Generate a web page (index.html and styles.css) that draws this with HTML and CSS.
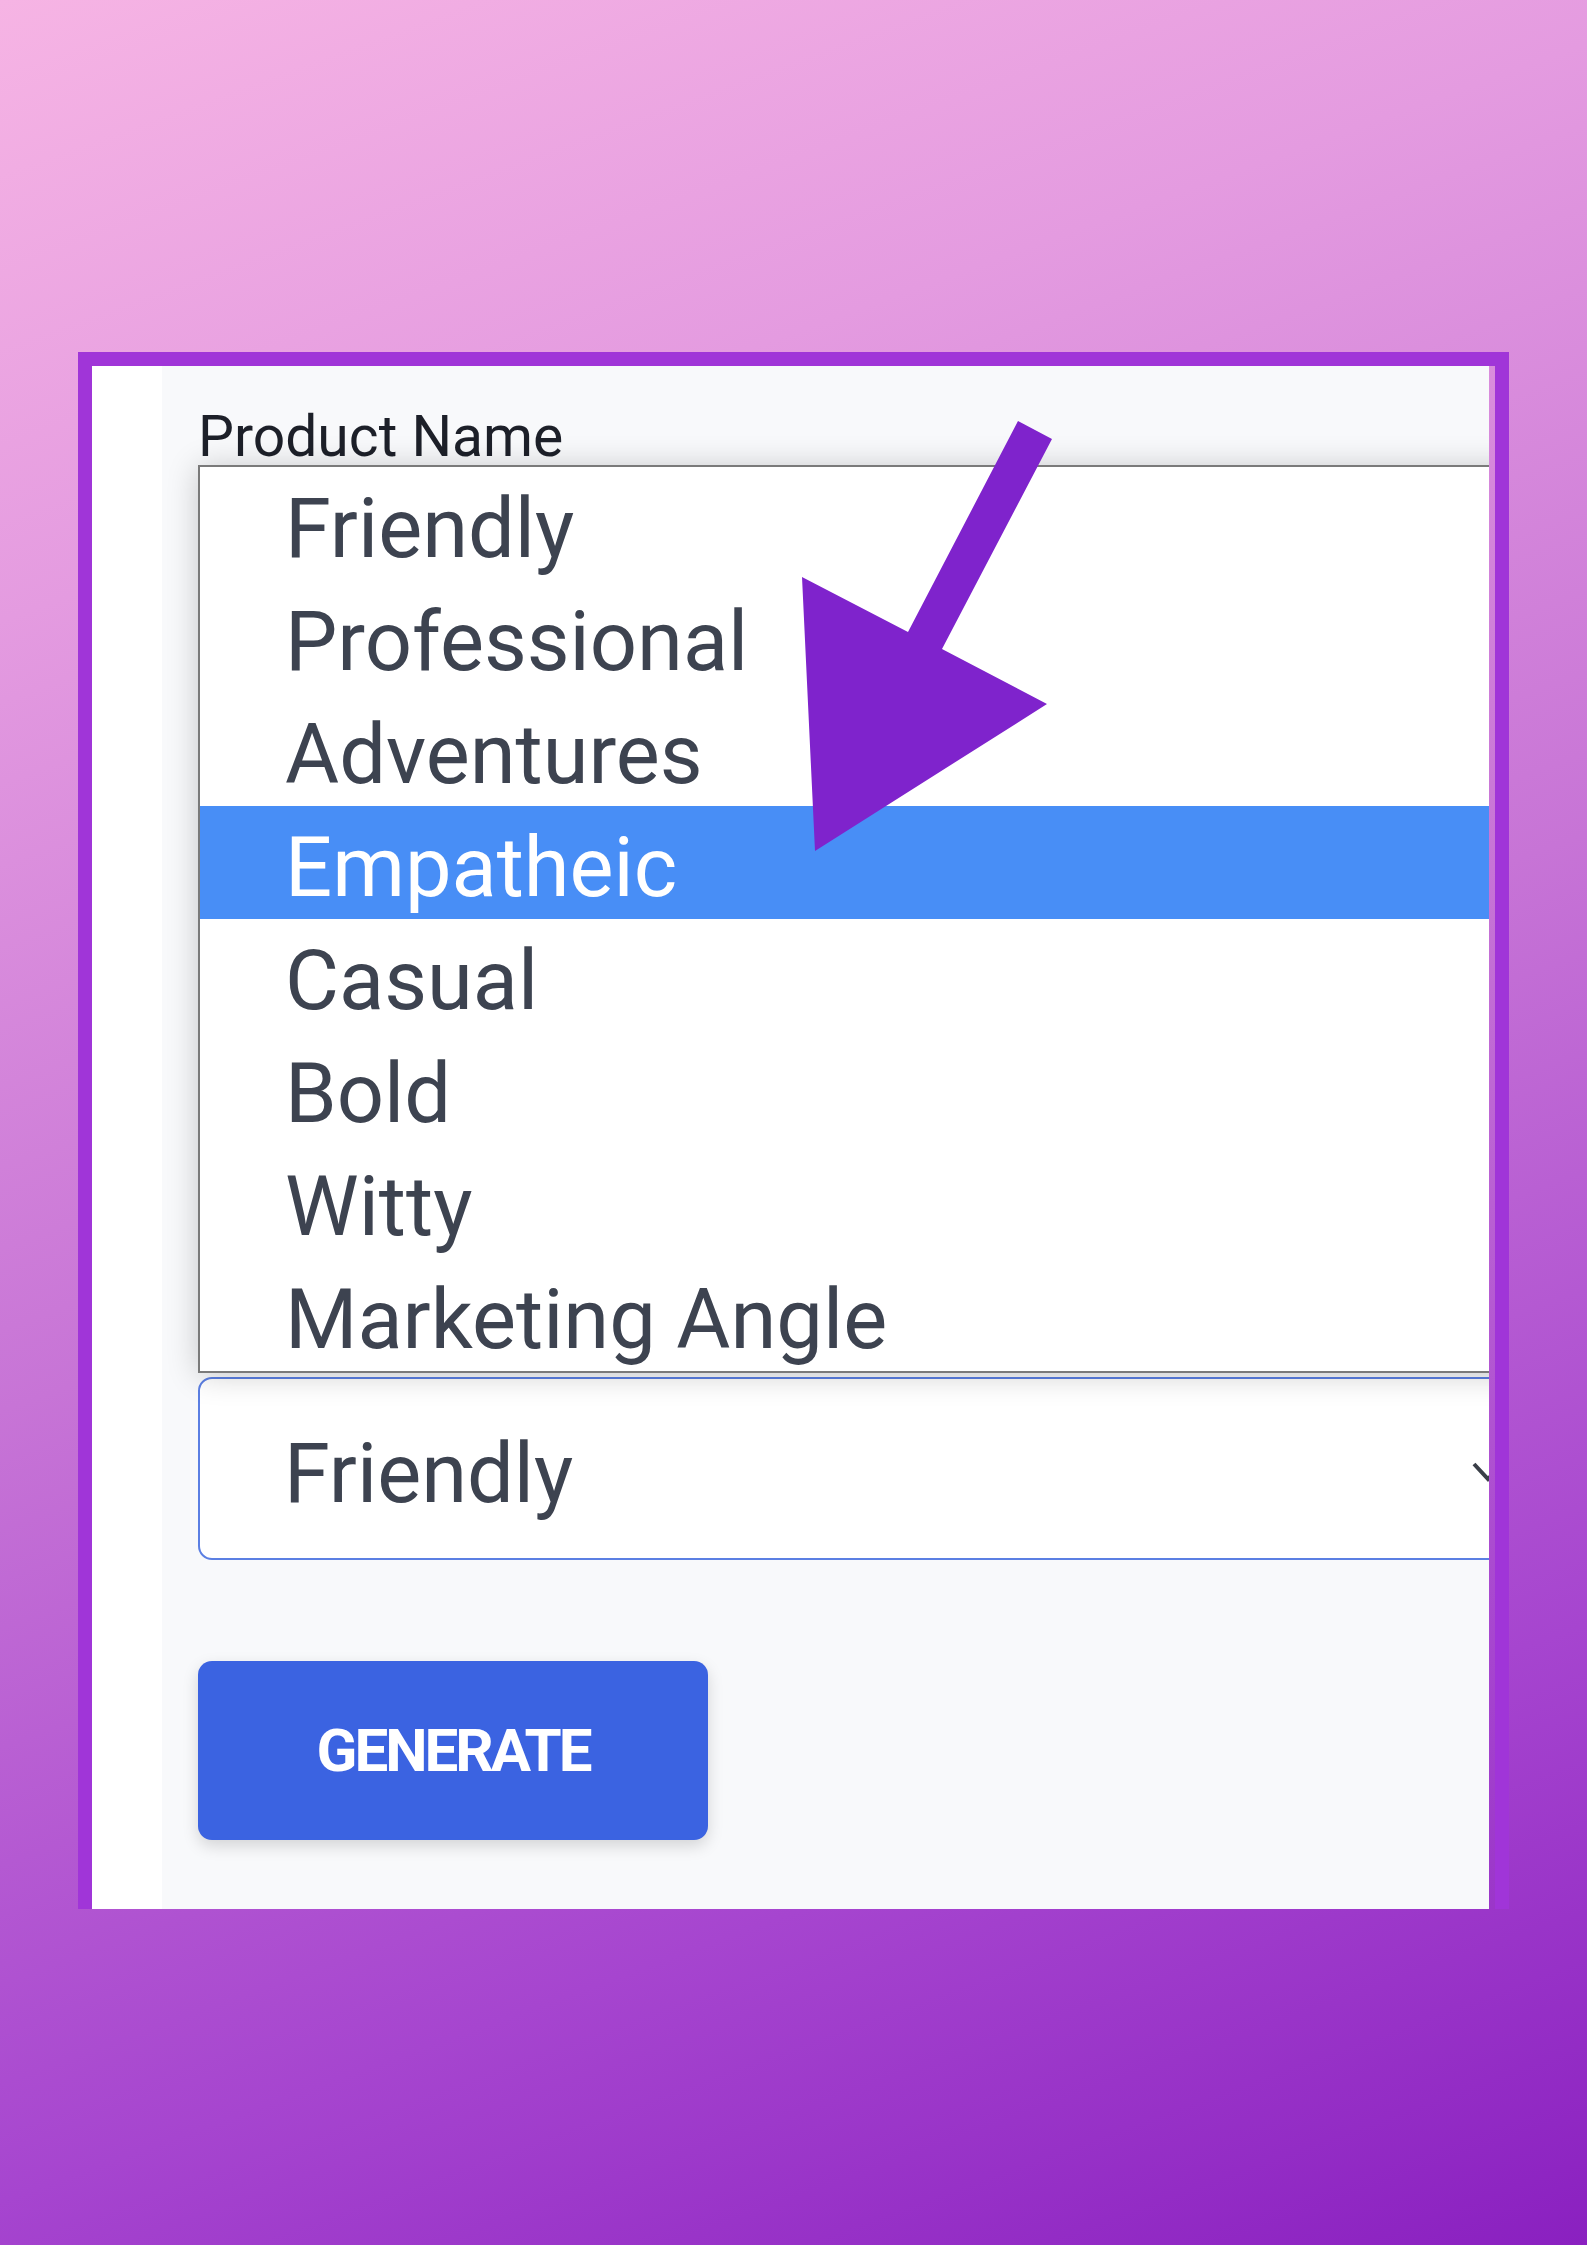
FILE: index.html
```html
<!DOCTYPE html>
<html lang="en">

<head>
    <meta charset="UTF-8">
    <title>Tone picker</title>
    <link rel="stylesheet" href="styles.css">
</head>

<body>
    <!-- Framed screenshot of the form -->
    <div class="frame">
        <div class="shot">
            <div class="gutter"></div>

            <div class="form">
                <label class="field-label" for="tone">Product Name</label>

                <!-- Open dropdown list -->
                <ul class="listbox">
                    <li>Friendly</li>
                    <li>Professional</li>
                    <li>Adventures</li>
                    <li class="selected">Empatheic</li>
                    <li>Casual</li>
                    <li>Bold</li>
                    <li>Witty</li>
                    <li>Marketing Angle</li>
                </ul>

                <div class="select" id="tone">
                    <span>Friendly</span>
                    <svg class="chevron" width="36" height="24" viewBox="0 0 36 24">
                        <path d="M4 3 L18 18 L32 3" fill="none" stroke="#3a3f48" stroke-width="4" />
                    </svg>
                </div>

                <button class="generate" type="button">GENERATE</button>
            </div>
        </div>
    </div>

    <!-- Pointer arrow over the list -->
    <svg class="arrow" width="1587" height="2245" viewBox="0 0 1587 2245">
        <polygon points="1018,421 1052,439 942,649 1047,704 815,851 802,577 908,632" fill="#7f23cc" />
    </svg>
</body>

</html>
```

FILE: styles.css
```css
html,
body {
    margin: 0;
    padding: 0;
}

body {
    width: 1587px;
    height: 2245px;
    overflow: hidden;
    position: relative;
    background: linear-gradient(160deg, #f6b4e4 0%, #e49be0 22%, #c774d6 50%, #a645cf 78%, #8a20c0 100%);
    font-family: Roboto, "Open Sans", sans-serif;
}

/* Purple frame round the screenshot */
.frame {
    box-sizing: border-box;
    width: 1431px;
    margin: 352px 0 0 78px;
    border: 14px solid #a035d8;
    border-bottom: none;
    padding-right: 6px;
}

.shot {
    display: flex;
    height: 1543px;
    overflow: hidden;
    background: #ffffff;
}

.gutter {
    width: 70px;
    flex-shrink: 0;
    background: #ffffff;
}

.form {
    flex: 1;
    min-width: 0;
    overflow: hidden;
    background: #f8f9fb;
    padding: 43px 0 0 36px;
    display: flex;
    flex-direction: column;
    align-items: flex-start;
}

.field-label {
    display: block;
    font-size: 57px;
    line-height: 56px;
    color: #1d2029;
}

/* Dropdown list */
.listbox {
    list-style: none;
    margin: 0 0 4px;
    padding: 0;
    width: 1400px;
    flex-shrink: 0;
    background: #ffffff;
    border: 2px solid #7a7a7a;
    box-shadow: 0 2px 30px rgba(0, 0, 0, 0.2);
    position: relative;
    z-index: 1;
}

.listbox li {
    height: 113px;
    box-sizing: border-box;
    padding: 11px 0 0 85px;
    font-size: 83px;
    line-height: 102px;
    color: #3d4350;
}

.listbox li.selected {
    background: #488ef6;
    color: #ffffff;
}

/* Closed select */
.select {
    box-sizing: border-box;
    width: 1340px;
    height: 183px;
    flex-shrink: 0;
    display: flex;
    justify-content: space-between;
    align-items: center;
    padding: 0 30px 0 84px;
    background: #ffffff;
    border: 2px solid #5b7fe3;
    border-radius: 14px;
    font-size: 83px;
    color: #3d4350;
}

.select span {
    line-height: 169px;
    padding-top: 10px;
}

.chevron {
    margin-top: 8px;
}

.generate {
    margin-top: 101px;
    width: 510px;
    height: 179px;
    border: none;
    border-radius: 14px;
    background: #3b63e1;
    color: #ffffff;
    font-family: Roboto, "Open Sans", sans-serif;
    font-size: 60px;
    font-weight: 700;
    letter-spacing: -3px;
    box-shadow: 0 6px 16px rgba(0, 0, 0, 0.15);
    cursor: pointer;
}

.arrow {
    position: absolute;
    left: 0;
    top: 0;
    z-index: 2;
    pointer-events: none;
}
```
